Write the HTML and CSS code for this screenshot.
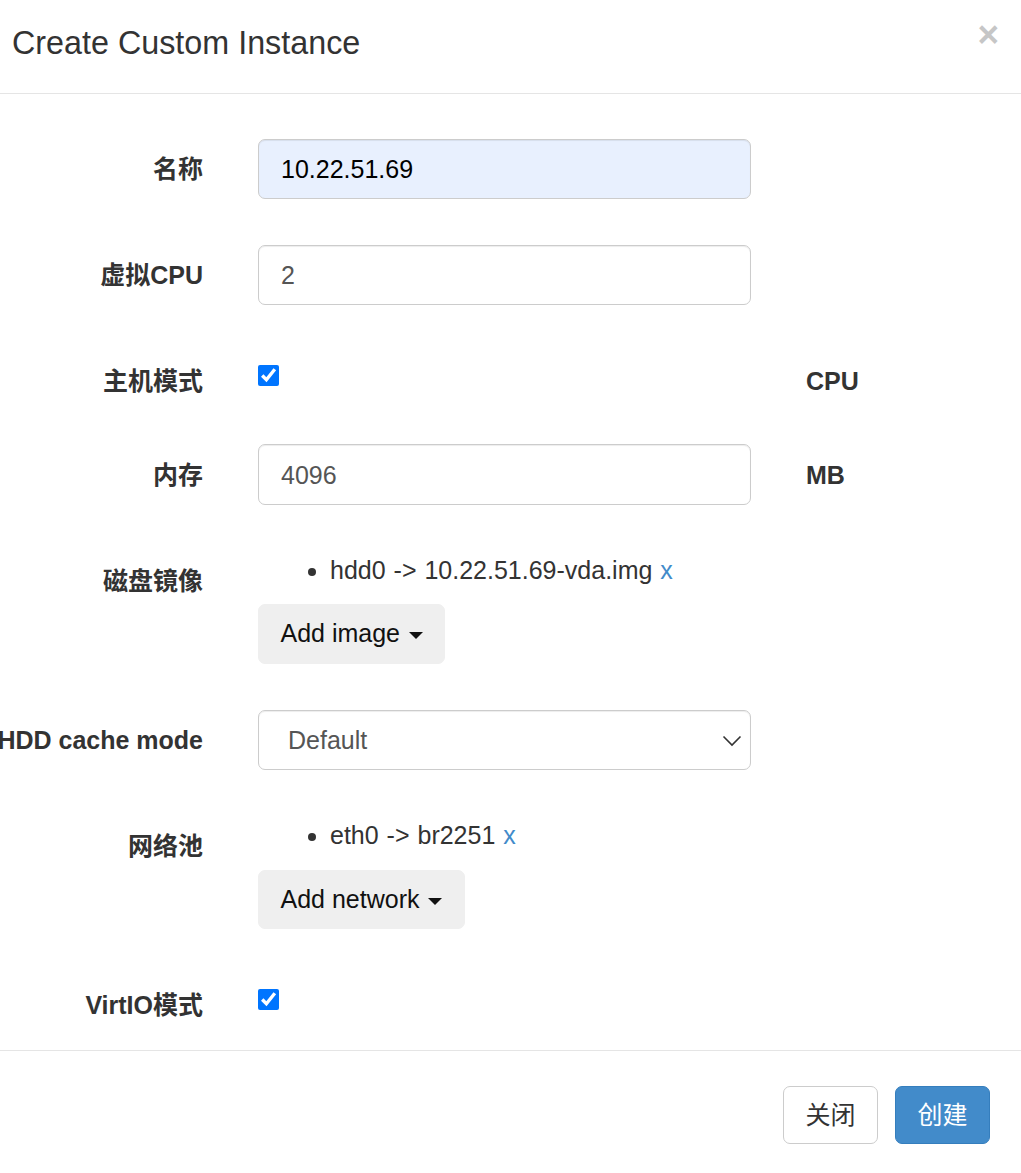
FILE: index.html
```html
<!DOCTYPE html>
<html lang="zh">
<head>
<meta charset="utf-8">
<title>Create Custom Instance</title>
<link rel="stylesheet" href="styles.css">
</head>
<body>
<div class="modal">
  <div class="modal-header">
    <h4 class="modal-title">Create Custom Instance</h4>
    <button class="close" type="button">&times;</button>
  </div>
  <div class="modal-body">
    <div class="form-row">
      <div class="control-label">名称</div>
      <input class="form-control autofill" type="text" value="10.22.51.69">
    </div>
    <div class="form-row">
      <div class="control-label">虚拟CPU</div>
      <input class="form-control" type="text" value="2">
    </div>
    <div class="form-row">
      <div class="control-label">主机模式</div>
      <div class="check-cell"><input class="check" type="checkbox" checked></div>
      <div class="control-label side">CPU</div>
    </div>
    <div class="form-row">
      <div class="control-label">内存</div>
      <input class="form-control" type="text" value="4096">
      <div class="control-label side">MB</div>
    </div>
    <div class="form-row">
      <div class="control-label">磁盘镜像</div>
      <div class="stack">
        <ul class="items">
          <li>hdd0 -&gt; 10.22.51.69-vda.img <a class="del" href="#">x</a></li>
        </ul>
        <button class="btn btn-add" type="button">Add image <span class="caret"></span></button>
      </div>
    </div>
    <div class="form-row">
      <div class="control-label">HDD cache mode</div>
      <div class="select-wrap">
        <select class="form-control select">
          <option>Default</option>
        </select>
        <svg class="chevron" width="20" height="12" viewBox="0 0 20 12"><path d="M1.5 1.5 L10 10 L18.5 1.5" fill="none" stroke="#333" stroke-width="1.6"/></svg>
      </div>
    </div>
    <div class="form-row">
      <div class="control-label">网络池</div>
      <div class="stack">
        <ul class="items">
          <li>eth0 -&gt; br2251 <a class="del" href="#">x</a></li>
        </ul>
        <button class="btn btn-add" type="button">Add network <span class="caret"></span></button>
      </div>
    </div>
    <div class="form-row">
      <div class="control-label">VirtIO模式</div>
      <div class="check-cell"><input class="check" type="checkbox" checked></div>
    </div>
  </div>
  <div class="modal-footer">
    <button class="btn btn-default" type="button">关闭</button>
    <button class="btn btn-primary" type="button">创建</button>
  </div>
</div>
</body>
</html>
```
FILE: styles.css
```css
html, body {
  margin: 0;
  padding: 0;
  background: #fff;
}
body {
  font-family: "Liberation Sans", "Noto Sans CJK SC", sans-serif;
  font-size: 25px;
  line-height: 35.7px;
  color: #333;
}
.modal {
  width: 1021px;
  overflow: hidden;
}
.modal-header {
  display: flex;
  justify-content: space-between;
  align-items: flex-start;
  padding: 21px 22px 26px 12px;
  border-bottom: 1px solid #e5e5e5;
}
.modal-title {
  margin: 0;
  font-size: 32.3px;
  line-height: 45.7px;
  font-weight: normal;
  color: #333;
}
.close {
  border: 0;
  background: none;
  padding: 0;
  margin-top: -5px;
  font-family: "Liberation Sans", sans-serif;
  font-size: 37px;
  font-weight: bold;
  line-height: 1;
  color: #000;
  opacity: .22;
  cursor: pointer;
}
.modal-body {
  display: flex;
  flex-direction: column;
  gap: 45.5px;
  padding: 45px 0 27px 0;
}
.form-row {
  display: grid;
  grid-template-columns: 203px 493px auto;
  column-gap: 55px;
  align-items: start;
}
.control-label {
  display: flex;
  justify-content: flex-end;
  white-space: nowrap;
  font-weight: bold;
  padding-top: 14.5px;
  line-height: 33.7px;
  color: #333;
}
.control-label.side {
  justify-content: flex-start;
}
.form-control {
  box-sizing: border-box;
  width: 493px;
  height: 60.5px;
  margin: 0;
  padding: 11px 22px 10px;
  font-family: inherit;
  font-size: 25px;
  line-height: 35.7px;
  color: #555;
  background: #fff;
  border: 1px solid #ccc;
  border-radius: 7px;
  box-shadow: inset 0 1px 1px rgba(0,0,0,.075);
  outline: none;
}
.form-control.autofill {
  background: #e8f0fe;
  color: #000;
}
.check-cell {
  padding-top: 14px;
  height: 34px;
}
.check {
  display: block;
  width: 21px;
  height: 21px;
  margin: 0;
  accent-color: #0075ff;
}
.stack {
  display: flex;
  flex-direction: column;
  align-items: flex-start;
}
.items {
  margin: 0;
  padding: 1.5px 0 0 72px;
  list-style: disc;
}
.items li {
  line-height: 36px;
  word-spacing: 1px;
}
.del {
  color: #428bca;
  text-decoration: none;
}
.btn {
  font-family: inherit;
  font-size: 25px;
  line-height: 35.7px;
  padding: 11px 21.5px;
  border: 1px solid transparent;
  border-radius: 7px;
  cursor: pointer;
}
.btn-add {
  margin-top: 16.5px;
  background: #efefef;
  border-color: #efefef;
  color: #111;
}
.caret {
  display: inline-block;
  width: 0;
  height: 0;
  margin-left: 2px;
  vertical-align: middle;
  border-top: 7px solid #111;
  border-left: 7px solid transparent;
  border-right: 7px solid transparent;
}
.select-wrap {
  position: relative;
  width: 493px;
}
.select {
  display: block;
  -webkit-appearance: none;
  appearance: none;
  padding-left: 29px;
}
.chevron {
  position: absolute;
  right: 9px;
  top: 25px;
}
.modal-footer {
  display: flex;
  justify-content: flex-end;
  gap: 17px;
  padding: 35px 31px 30px 0;
  border-top: 1px solid #e5e5e5;
}
.modal-footer .btn {
  padding: 10.5px 21.5px;
  line-height: 35px;
}
.btn-default {
  background: #fff;
  border-color: #ccc;
  color: #333;
}
.btn-primary {
  background: #428bca;
  border-color: #357ebd;
  color: #fff;
}
```
